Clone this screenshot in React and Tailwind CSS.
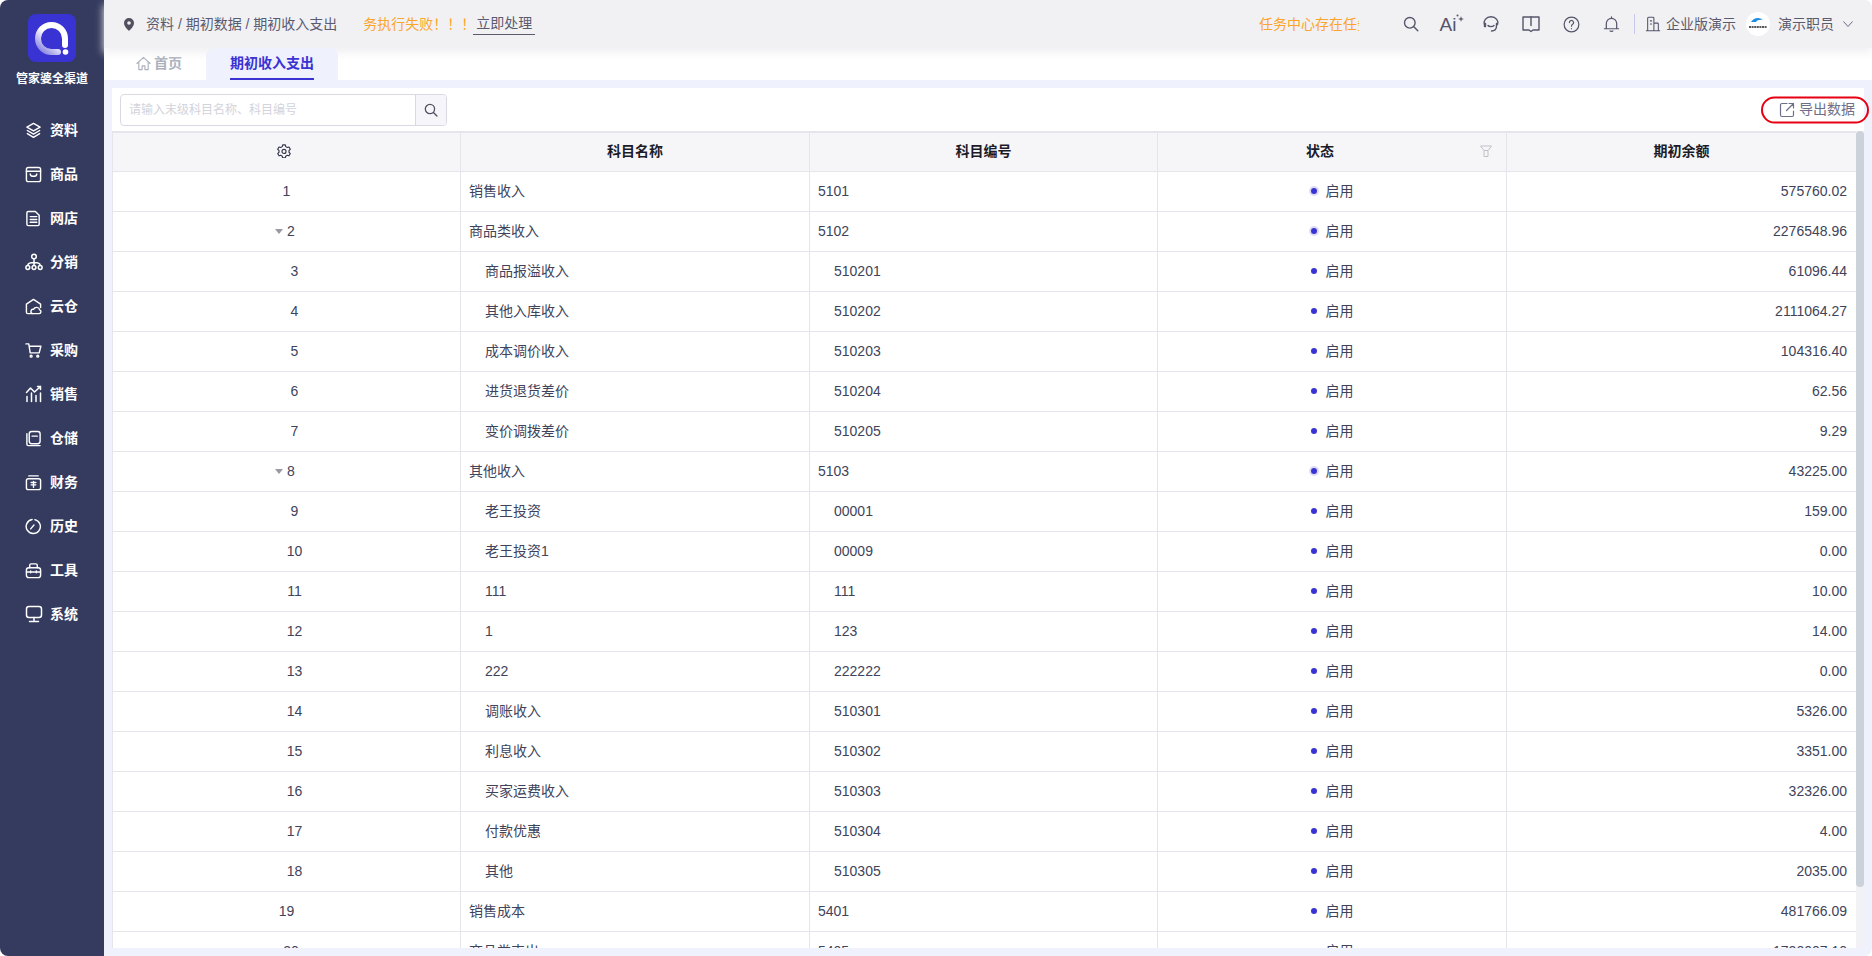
import React from "react";

const S = ({ children, size = 18, w = 1.5, className = "", vb = "0 0 18 18" }) => (
  <svg width={size} height={size} viewBox={vb} fill="none" stroke="currentColor" strokeWidth={w} strokeLinecap="round" strokeLinejoin="round" className={className}>
    {children}
  </svg>
);

const navIcons = {
  layers: <><path d="M9 1.500 16 5.500 9 9.500 2 5.500Z" /><path d="M2.500 9 9 12.800 15.500 9" /><path d="M2.500 12.300 9 16.200 15.500 12.300" /></>,
  shop: <><rect x="1.500" y="1.500" width="15" height="15" rx="2" /><path d="M1.500 5.500h15" /><path d="M5.500 8.500c.5 3.200 6.500 3.200 7 0" /></>,
  file: <><path d="M3.500 1.500h7.500l4 4v9.500a1.500 1.500 0 0 1-1.500 1.500h-10a1.500 1.500 0 0 1-1.500-1.500v-12a1.500 1.500 0 0 1 1.500-1.500Z" /><path d="M5.500 7h7M5.500 10h7M5.500 13h7" /></>,
  tree: <><circle cx="9" cy="3.500" r="2.300" /><circle cx="2.800" cy="14.500" r="1.900" /><circle cx="9" cy="14.500" r="1.900" /><circle cx="15.200" cy="14.500" r="1.900" /><path d="M9 6v6.500M2.800 12.500c0-2.500 2-3 6.200-3s6.200.5 6.200 3" /></>,
  cloud: <><path d="M8 16.500H3a1.500 1.500 0 0 1-1.500-1.500V6.500L9 1.500l7.500 5V10" /><path d="M8 16.500h7a2 2 0 0 0 .5-3.900 3.300 3.300 0 0 0-6.300-.6A2.300 2.300 0 0 0 8 16.500Z" /></>,
  cart: <><path d="M1 2h3l1.500 9.500h9.500L16.800 4.500H4.500" /><circle cx="6.500" cy="15" r="1" /><circle cx="13.500" cy="15" r="1" /></>,
  chart: <><path d="M2 16.500v-5M6.500 16.500V8M11 16.500v-6M15.500 16.500V8" /><path d="M1.500 7.500 5.500 3l4 4 6-5.500M12.500 1.500h3v3" /></>,
  store: <><path d="M2 4v11a1.500 1.500 0 0 0 1.500 1.500H16" /><rect x="4.500" y="1.500" width="11.500" height="13" rx="2.500" /><path d="M7.500 6.500h5.500" /></>,
  money: <><rect x="1.500" y="5" width="15" height="11.500" rx="2" /><path d="M4 2h10M9 8v6M6.500 9h5M6.500 11.500h5" /></>,
  clock: <><path d="M10.500 1.700a7.500 7.500 0 1 1-3-.1" /><path d="M9.500 7.500 6 11.500" /></>,
  box: <><rect x="1.500" y="6" width="15" height="10.500" rx="2.500" /><path d="M5 6V3.500a1.500 1.500 0 0 1 1.500-1.500h5A1.500 1.500 0 0 1 13 3.500V6M1.500 10.500h15M6 9.500v2M12 9.500v2" /></>,
  monitor: <><rect x="1.500" y="1.500" width="15" height="11" rx="2.500" /><path d="M9 12.500v4M4.500 16.500h9" /></>,
};

const navItems = [
  ["layers", "资料", 0], ["shop", "商品", 0], ["file", "网店", 0], ["tree", "分销", 1], ["cloud", "云仓", 0], ["cart", "采购", 0],
  ["chart", "销售", 1], ["store", "仓储", 0], ["money", "财务", 0], ["clock", "历史", 0], ["box", "工具", 0], ["monitor", "系统", 1],
];

const rows = [
  ["销售收入", "5101", "575760.02", 0], ["商品类收入", "5102", "2276548.96", 1],
  ["商品报溢收入", "510201", "61096.44", 2], ["其他入库收入", "510202", "2111064.27", 2], ["成本调价收入", "510203", "104316.40", 2],
  ["进货退货差价", "510204", "62.56", 2], ["变价调拨差价", "510205", "9.29", 2], ["其他收入", "5103", "43225.00", 1],
  ["老王投资", "00001", "159.00", 2], ["老王投资1", "00009", "0.00", 2], ["111", "111", "10.00", 2], ["1", "123", "14.00", 2],
  ["222", "222222", "0.00", 2], ["调账收入", "510301", "5326.00", 2], ["利息收入", "510302", "3351.00", 2], ["买家运费收入", "510303", "32326.00", 2],
  ["付款优惠", "510304", "4.00", 2], ["其他", "510305", "2035.00", 2], ["销售成本", "5401", "481766.09", 3], ["商品类支出", "5405", "1720007.10", 4],
];

const Logo = () => (
  <svg width="48" height="48" viewBox="0 0 48 48" fill="none">
    <defs>
      <linearGradient id="lg" x1="10" y1="34" x2="28" y2="12" gradientUnits="userSpaceOnUse">
        <stop offset="0" stopColor="#8f8ce2" />
        <stop offset="0.6" stopColor="#ffffff" />
      </linearGradient>
    </defs>
    <rect width="48" height="48" rx="8" fill="#3a33d4" />
    <path d="M37 31V24.500A13.500 13.500 0 1 0 23.500 38H30" stroke="url(#lg)" strokeWidth="6" strokeLinecap="round" />
    <circle cx="37.500" cy="38" r="2.800" fill="#fff" />
  </svg>
);

export default function App() {
  return (
    <div className="flex h-[956px] w-[1872px] overflow-hidden rounded-lg bg-white text-[14px] [font-family:'Liberation_Sans','Noto_Sans_CJK_SC',sans-serif]">
      <aside className="flex w-[104px] shrink-0 flex-col items-center bg-[#353b5e] pt-[14px] text-white">
        <Logo />
        <div className="mt-[10px] text-[12px] font-bold leading-[14px]">管家婆全渠道</div>
        <nav className="mt-[22px] flex w-full flex-col">
          {navItems.map(([icon, label, shift]) => (
            <div key={label} className="flex h-11 items-center pl-[25px]">
              <S size={shift ? 18 : 17}>{navIcons[icon]}</S>
              <span className={shift ? "ml-[7px] font-bold" : "ml-2 font-bold"}>{label}</span>
            </div>
          ))}
        </nav>
      </aside>

      <main className="flex min-w-0 flex-1 flex-col bg-[#eff1fd]">
        <header className="relative z-10 flex h-12 shrink-0 items-center bg-[#f1f1f4] pl-5 pr-[19px] text-[#5b5b70] shadow-[0_5px_8px_#f1f1f4]">
          <svg width="10" height="13" viewBox="0 0 10 13" className="shrink-0">
            <path d="M5 0a5 5 0 0 1 5 5c0 3.200-3.500 6.500-5 8C3.500 11.500 0 8.200 0 5a5 5 0 0 1 5-5Z" fill="#50505f" />
            <circle cx="5" cy="5" r="1.800" fill="#f1f1f4" />
          </svg>
          <div className="ml-3 whitespace-nowrap">资料 / 期初数据 / 期初收入支出</div>
          <div className="ml-[26px] whitespace-nowrap text-[#fba52c]">务执行失败！！！</div>
          <div className="ml-[-2px] flex h-[22px] items-center border-b border-[#5b5b70] px-[3px]">立即处理</div>
          <div className="ml-auto w-[100px] overflow-hidden whitespace-nowrap text-[#fba52c]">任务中心存在任务</div>
          <div className="ml-[32px] flex items-center text-[#55556b]">
            <div className="flex w-10 justify-center">
              <S size={16} vb="0 0 16 16" w={1.4}><circle cx="6.800" cy="6.800" r="5.300" /><path d="m10.800 10.800 4 4" /></S>
            </div>
            <div className="flex w-10 items-center justify-center pl-[2px]">
              <span className="text-[19px] leading-none">Ai</span>
              <svg width="8" height="12" viewBox="0 0 8 12" fill="currentColor" className="-mt-[8px]"><path d="M5 2 5.700 4.300 8 5 5.700 5.700 5 8 4.300 5.700 2 5 4.300 4.300Z" /><circle cx="1.500" cy="1.500" r="1" /></svg>
            </div>
            <div className="flex w-10 justify-center">
              <S size={18} w={1.4}><path d="M2.500 9.500C1 6 4 1.800 9 1.800s8 4.200 6.500 7.700" /><path d="M2.500 8.500h1v3h-1ZM15 8.500h-.5v2" /><path d="M6 10.500c1 1.500 4.500 1.500 6 0" /><path d="M14.500 11c0 3-2 5-5 5" /></S>
            </div>
            <div className="flex w-10 justify-center">
              <S size={18} w={1.4}><path d="M1 2h16v13h-6l-2 1.500L7 15H1Z" /><path d="M9 2v8.500" /></S>
            </div>
            <div className="flex w-10 justify-center">
              <S size={17} w={1.3}><circle cx="9" cy="9" r="7.800" /><path d="M6.800 7a2.200 2.200 0 1 1 3.400 1.800c-.8.500-1.200 1-1.200 2" /><path d="M9 13.300v.1" /></S>
            </div>
            <div className="flex w-10 justify-center">
              <S size={17} w={1.3}><path d="M3.500 13.500V8a5.500 5.500 0 0 1 11 0v5.500M1.500 13.500h15" /><path d="M7.500 15.800c.5.700 2.500.7 3 0M9 1v1" /></S>
            </div>
          </div>
          <div className="ml-[3px] h-5 w-px bg-[#c5c8ea]" />
          <div className="ml-[10px] text-[#55556b]">
            <S size={16} vb="0 0 16 18" w={1.2}><path d="M2 16.500V2.500a1 1 0 0 1 1-1h5a1 1 0 0 1 1 1v14M9 8h4a1 1 0 0 1 1 1v7.500M.5 16.500h15M5 5.500h1.500M5 9h1.500" /></S>
          </div>
          <div className="ml-[5px] whitespace-nowrap">企业版演示</div>
          <div className="ml-[10px] flex h-6 w-6 shrink-0 items-center justify-center rounded-full bg-white">
            <svg width="20" height="16" viewBox="0 0 20 16">
              <path d="M3 6C6 1 12 1 15 4c-3-.5-6 0-7 2Z" fill="#1d8de0" />
              <path d="M1 11h18" stroke="#222" strokeWidth="1.600" strokeDasharray="2 .6" />
            </svg>
          </div>
          <div className="ml-2 whitespace-nowrap">演示职员</div>
          <svg width="10" height="6" viewBox="0 0 10 6" fill="none" stroke="#6a6a7e" className="ml-[9px]"><path d="m.5.5 4.500 5 4.500-5" /></svg>
        </header>

        <div className="flex h-8 shrink-0 bg-white pl-8">
          <div className="flex w-[70px] items-center pb-[2px] font-bold text-[#aab0bd]">
            <S size={15} vb="0 0 16 16" w={1.2}><path d="M1 8 8 1.500 15 8M3 6.500V14.500h3.500V10.500h3V14.500H13V6.500" /></S>
            <span className="ml-[3px]">首页</span>
          </div>
          <div className="relative z-20 flex h-8 w-[132px] justify-center rounded-t-lg bg-[#eff1fd]">
            <div className="flex h-8 items-center border-b-2 border-[#3a33d4] font-bold text-[#3a33d4]">期初收入支出</div>
          </div>
        </div>

        <section className="m-2 flex min-h-0 flex-1 flex-col bg-white">
          <div className="flex h-[43px] shrink-0 items-center justify-between pl-2 pr-[9px]">
            <div className="flex h-8 w-[327px] overflow-hidden rounded border border-[#d9d9e3]">
              <div className="flex flex-1 items-center pl-2 text-[12px] text-[#d3d3dc]">请输入末级科目名称、科目编号</div>
              <div className="flex w-[31px] items-center justify-center border-l border-[#d9d9e3] bg-[#f6f6fa] text-[#50505f]">
                <S size={14} vb="0 0 16 16" w={1.5}><circle cx="6.800" cy="6.800" r="5.300" /><path d="m10.800 10.800 4 4" /></S>
              </div>
            </div>
            <div className="relative flex items-center text-[#6d6f88]">
              <S size={16} vb="0 0 16 16" w={1.2}><path d="M8 1.500H3A1.500 1.500 0 0 0 1.500 3v10A1.500 1.500 0 0 0 3 14.500h10a1.500 1.500 0 0 0 1.500-1.500V9" /><path d="M7.500 8.500 14.500 1.500M10 1.500h4.500V6" /></S>
              <span className="ml-1 whitespace-nowrap">导出数据</span>
              <div className="absolute -left-[18px] -right-[14px] top-1/2 h-[27px] -translate-y-1/2 rounded-full border-2 border-[#e60012]" />
            </div>
          </div>

          <div className="flex min-h-0 flex-1">
            <div className="min-w-0 flex-1 overflow-hidden">
              <table className="w-[1744px] table-fixed border-separate border-spacing-0 text-[#40435a]">
                <colgroup>
                  <col className="w-[349px]" /><col className="w-[349px]" /><col className="w-[348px]" /><col className="w-[349px]" /><col className="w-[349px]" />
                </colgroup>
                <thead>
                  <tr className="h-[41px] bg-[#f6f6f9] font-bold text-[#1c1c28]">
                    <th className="border-y border-l border-r border-t-2 border-[#e5e5ec] pb-[2px]">
                      <div className="flex justify-center pr-[6px] text-[#35354a]">
                        <S size={14} vb="0 0 16 16" w={1.3}><path d="M6.500 1h3l.5 2 1.700 1 2-.6 1.500 2.600-1.500 1.500v1.900l1.500 1.500-1.500 2.600-2-.6-1.700 1-.5 2h-3l-.5-2-1.700-1-2 .6L.8 10.900l1.500-1.500V7.500L.8 6l1.500-2.600 2 .6L6 3Z" /><circle cx="8" cy="8.500" r="2.300" /></S>
                      </div>
                    </th>
                    <th className="border-y border-r border-t-2 border-[#e5e5ec] pb-[2px]">科目名称</th>
                    <th className="border-y border-r border-t-2 border-[#e5e5ec] pb-[2px]">科目编号</th>
                    <th className="border-y border-r border-t-2 border-[#e5e5ec] pb-[2px]">
                      <div className="flex items-center">
                        <span className="flex-1 pl-[2px] text-center">状态</span>
                        <svg width="12" height="12" viewBox="0 0 12 12" fill="none" stroke="#bfc0c8" className="mr-[14px]"><path d="M.5 1h11L8 5.500h-4ZM4 5.500h4v6H4Z" /></svg>
                      </div>
                    </th>
                    <th className="border-y border-t-2 border-[#e5e5ec] pb-[2px]">期初余额</th>
                  </tr>
                </thead>
                <tbody>
                  {rows.map(([name, code, amount, kind], i) => {
                    const child = kind === 2;
                    const halo = kind === 0 || kind === 1;
                    const tree = kind === 1 || kind === 4;
                    return (
                      <tr key={i} className="h-10">
                        <td className={child ? "border-b border-l border-r border-[#e5e5ec] pl-4 text-center" : "border-b border-l border-r border-[#e5e5ec] text-center"}>
                          {tree ? (
                            <span className="inline-flex items-center pb-[3px] pr-[3px]">
                              <svg width="8" height="5" viewBox="0 0 8 5" className="mr-[4px]"><path d="M0 0h8L4 5Z" fill="#9a9aa5" /></svg>
                              {i + 1}
                            </span>
                          ) : i + 1}
                        </td>
                        <td className={child ? "border-b border-r border-[#e5e5ec] pl-[24px]" : "border-b border-r border-[#e5e5ec] pl-2"}>{name}</td>
                        <td className={child ? "border-b border-r border-[#e5e5ec] pl-[24px]" : "border-b border-r border-[#e5e5ec] pl-2"}>{code}</td>
                        <td className="border-b border-r border-[#e5e5ec]">
                          <div className="flex items-center justify-center">
                            <span className={halo ? "mb-[2px] mr-[9px] h-[6px] w-[6px] rounded-full bg-[#3a33d4] shadow-[0_0_0_2px_#dcdcf7]" : "mb-[2px] mr-[9px] h-[6px] w-[6px] rounded-full bg-[#3a33d4]"} />
                            启用
                          </div>
                        </td>
                        <td className="border-b border-[#e5e5ec] pr-[9px] text-right">{amount}</td>
                      </tr>
                    );
                  })}
                </tbody>
              </table>
            </div>
            <div className="w-2 shrink-0 bg-[#f1f1f6]">
              <div className="h-[756px] rounded bg-[#cbd2da]" />
            </div>
          </div>
        </section>
      </main>
    </div>
  );
}
